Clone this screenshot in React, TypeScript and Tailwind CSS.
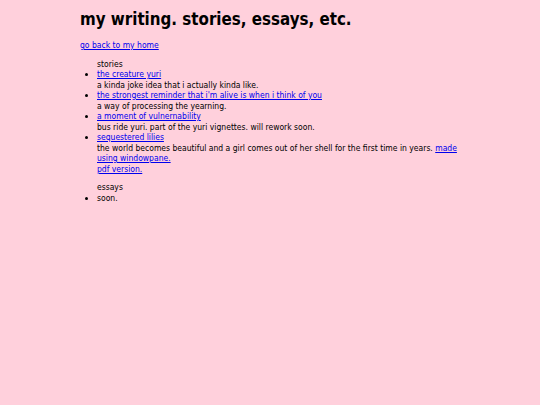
export default function App() {
  return (
    <div className="min-h-[405px] w-full bg-[#ffd0dc] text-black" style={{ fontFamily: '"DejaVu Sans Condensed", "DejaVu Sans", Verdana, sans-serif' }}>
      <div className="ml-[80px] w-[382px] pt-[8px]">
        <h1 className="text-[16.8px] font-bold leading-[22px] m-0">my writing. stories, essays, etc.</h1>
        <div className="mt-[10px] text-[8.5px] leading-[10.5px]">
          <a href="#" className="text-[#0000ee] underline">go back to my home</a>
        </div>
        <div className="mt-[8px] text-[8.5px] leading-[10.5px] pl-[17px]">
          <div>stories</div>
          <ul className="list-disc">
            <li><a href="#" className="text-[#0000ee] underline">the creature yuri</a></li>
            <div>a kinda joke idea that i actually kinda like.</div>
            <li><a href="#" className="text-[#0000ee] underline">the strongest reminder that i'm alive is when i think of you</a></li>
            <div>a way of processing the yearning.</div>
            <li><a href="#" className="text-[#0000ee] underline">a moment of vulnernability</a></li>
            <div>bus ride yuri. part of the yuri vignettes. will rework soon.</div>
            <li><a href="#" className="text-[#0000ee] underline">sequestered lilies</a></li>
            <div>the world becomes beautiful and a girl comes out of her shell for the first time in years. <a href="#" className="text-[#0000ee] underline">made using windowpane.</a></div>
            <div><a href="#" className="text-[#0000ee] underline">pdf version.</a></div>
          </ul>
          <div className="mt-[8px]">essays</div>
          <ul className="list-disc">
            <li>soon.</li>
          </ul>
        </div>
      </div>
    </div>
  );
}
